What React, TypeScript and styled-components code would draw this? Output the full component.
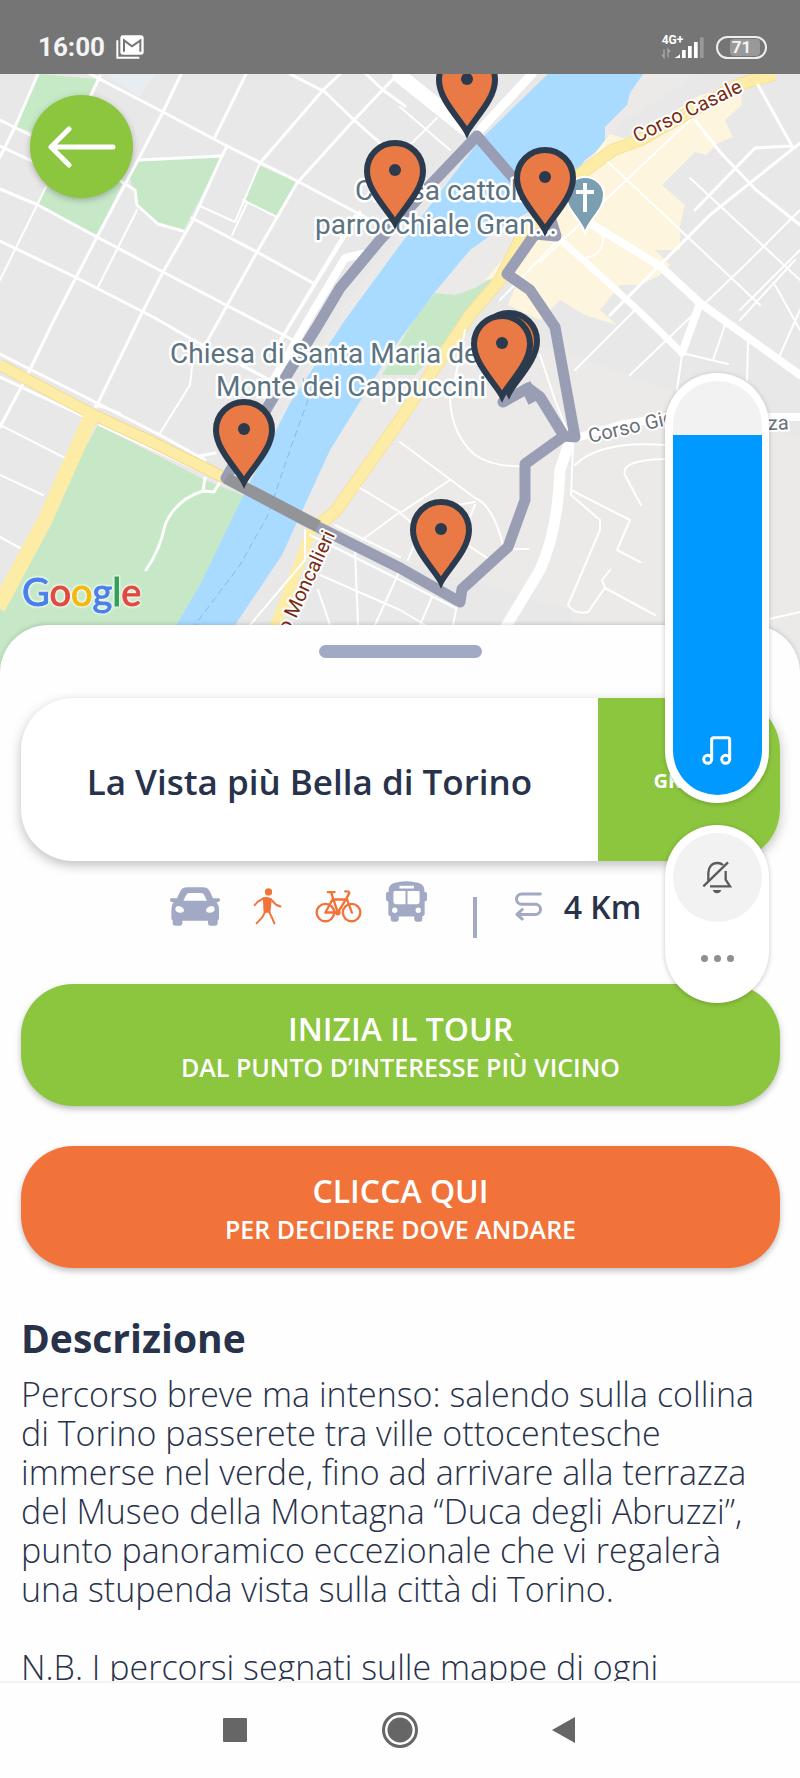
import React, { useState } from "react";
import styled, { createGlobalStyle } from "styled-components";

const colors = {
  green: "#8cc63e",
  orange: "#f2733a",
  lilac: "#a2a9c4",
  navy: "#28324a",
  blue: "#0099ff",
  pin: "#e97a45",
  pinEdge: "#2b3a4c",
};

const GlobalStyle = createGlobalStyle`
  * { box-sizing: border-box; }
  body { margin: 0; background: #fff; }
  button { border: 0; padding: 0; background: none; font: inherit; color: inherit; cursor: pointer; }
  h1, h2, p { margin: 0; }
  svg { display: block; }
`;

const Screen = styled.div`
  position: relative;
  display: flex;
  flex-direction: column;
  height: 100vh;
  overflow: hidden;
  background: #fefefe;
  color: ${colors.navy};
  font-family: "Open Sans", Lato, sans-serif;
`;

const StatusBar = styled.header`
  display: flex;
  flex: none;
  align-items: flex-end;
  justify-content: space-between;
  height: 74px;
  padding: 0 33px 14px 38px;
  background: #757575;
  color: #f4f4f4;
  font-family: Roboto, sans-serif;
`;

const StatusGroup = styled.div<{ $gap: number }>`
  display: flex;
  align-items: center;
  gap: ${(p) => p.$gap}px;
  height: 26px;
`;

const Clock = styled.time`
  font-size: 26px;
  line-height: 26px;
  font-weight: 700;
`;

const Battery = styled.div`
  display: flex;
  align-items: center;
  justify-content: center;
  width: 51px;
  height: 23px;
  border: 2px solid #eee;
  border-radius: 12px;
  font-size: 17px;
  line-height: 17px;
  font-weight: 700;

  span {
    padding: 0 9px 0 2px;
    margin-left: 7px;
    border-radius: 4px;
    background: #999;
  }
`;

const MapArea = styled.section`
  position: relative;
  flex: none;
  height: 551px;
`;

const MapDrawing = styled.svg`
  width: 100%;
  height: 600px;
  font-family: Roboto, sans-serif;
`;

const BackButton = styled.button`
  position: absolute;
  top: 21px;
  left: 30px;
  width: 103px;
  height: 103px;
  border-radius: 50%;
  background: ${colors.green};
  box-shadow: 0 2px 6px rgba(0, 0, 0, 0.25);

  svg { margin: 0 auto; }
`;

const Sheet = styled.main`
  position: relative;
  flex: 1;
  min-height: 0;
  overflow: hidden;
  display: flex;
  flex-direction: column;
  padding: 20px 20px 0 21px;
  border-radius: 48px 48px 0 0;
  background: #fefefe;
  box-shadow: 0 -1px 4px rgba(0, 0, 0, 0.15);
`;

const Handle = styled.button`
  flex: none;
  align-self: center;
  width: 163px;
  height: 13px;
  border-radius: 7px;
  background: ${colors.lilac};
`;

const TitleCard = styled.section`
  display: flex;
  flex: none;
  height: 163px;
  margin-top: 40px;
  overflow: hidden;
  border-radius: 52px;
  background: #fff;
  box-shadow: 0 4px 12px rgba(0, 0, 0, 0.25);
`;

const TourName = styled.h1`
  display: flex;
  flex: 1;
  align-items: center;
  justify-content: center;
  padding-top: 4px;
  font-size: 35px;
  line-height: 44px;
  font-weight: 600;
`;

const Price = styled.div`
  display: flex;
  align-items: center;
  justify-content: center;
  width: 24%;
  padding-top: 2px;
  background: ${colors.green};
  color: #fff;
  font-size: 20px;
  font-weight: 700;
`;

const Facts = styled.section`
  display: flex;
  flex: none;
  align-items: center;
  align-self: center;
  height: 123px;
  padding: 0 0 32px 10px;
`;

const ModeList = styled.ul`
  display: flex;
  align-items: center;
  gap: 24px;
  margin: 0;
  padding: 0;
  list-style: none;
`;

const Mode = styled.li<{ $space?: number; $lift?: number }>`
  padding: 0 ${(p) => p.$space ?? 0}px ${(p) => p.$lift ?? 0}px;
`;

const Divider = styled.span`
  width: 4px;
  height: 41px;
  margin: 22px 38px 0 46px;
  background: ${colors.lilac};
`;

const Distance = styled.span`
  margin-left: 22px;
  font-size: 32px;
  line-height: 40px;
  font-weight: 600;
`;

const Actions = styled.div`
  display: flex;
  flex: none;
  flex-direction: column;
  gap: 40px;
`;

const ActionButton = styled.button<{ $tone: string }>`
  display: flex;
  flex-direction: column;
  align-items: center;
  justify-content: center;
  height: 122px;
  padding-top: 4px;
  border-radius: 52px;
  background: ${(p) => p.$tone};
  box-shadow: 0 3px 6px rgba(0, 0, 0, 0.25);
  color: #fff;
  font-size: 25px;
  line-height: 36px;
  font-weight: 600;

  strong { font-size: 32px; line-height: 40px; font-weight: 600; }
`;

const Description = styled.section`
  flex: none;
  padding-top: 45px;

  h2 { font-size: 39px; line-height: 50px; font-weight: 700; }
`;

const Paragraph = styled.p`
  margin-top: 12px;
  margin-bottom: 39px;
  font-size: 34px;
  line-height: 39px;
  font-weight: 300;

  & + & { margin-top: 0; }
`;

const NavBar = styled.nav`
  position: relative;
  display: flex;
  flex: none;
  align-items: center;
  justify-content: center;
  gap: 118px;
  height: 97px;
  border-top: 2px solid #f3f3f3;
  background: #fefefe;
`;

const NavButton = styled.button`
  width: 46px;
  height: 46px;
`;

const Floating = styled.aside`
  position: absolute;
  top: 373px;
  right: 31px;
  display: flex;
  flex-direction: column;
  gap: 22px;
  width: 104px;
`;

const Pill = styled.div<{ $height: number }>`
  position: relative;
  display: flex;
  flex-direction: column;
  align-items: center;
  height: ${(p) => p.$height}px;
  padding: 8px;
  border-radius: 52px;
  background: #fff;
  box-shadow: 0 1px 5px rgba(0, 0, 0, 0.22);
`;

const Track = styled.div`
  display: flex;
  flex-direction: column;
  justify-content: flex-end;
  width: 89px;
  height: 100%;
  overflow: hidden;
  border-radius: 45px;
  background: #f2f2f2;
`;

const Level = styled.div`
  display: flex;
  align-items: flex-end;
  justify-content: center;
  padding-bottom: 30px;
  background: ${colors.blue};
`;

const VolumeInput = styled.input`
  position: absolute;
  inset: 0;
  width: 100%;
  height: 100%;
  margin: 0;
  opacity: 0;
  writing-mode: vertical-lr;
  direction: rtl;
`;

const MuteButton = styled.button`
  display: flex;
  align-items: center;
  justify-content: center;
  width: 89px;
  height: 89px;
  border-radius: 50%;
  background: #f2f2f2;
`;

const MoreButton = styled.button`
  display: flex;
  align-items: center;
  justify-content: center;
  gap: 6px;
  width: 60px;
  height: 72px;

  span { width: 7px; height: 7px; border-radius: 50%; background: #8f8f8f; }
`;

const CarIcon = () => (
  <svg width="50" height="39" viewBox="0 0 150 117" fill={colors.lilac} aria-label="Auto" role="img">
    <path
      fillRule="evenodd"
      d="M4 34 H21 L30 14 Q36 1 52 1 H98 Q114 1 120 14 L129 34 H146 Q151 34 150 40 Q149 46 140 46 Q147 55 147 68 V94 Q147 98 143 100 V108 Q143 116 134 116 H122 Q114 116 114 108 V101 H37 V108 Q37 116 28 116 H17 Q8 116 8 108 V100 Q4 98 4 93 V68 Q4 54 11 46 Q1 46 0 40 Q0 34 4 34 Z M40 41 H111 L102 23 Q100 18 93 18 H58 Q52 18 49 23 Z M16 66 Q16 57 26 57 Q42 60 42 71 Q40 77 29 77 Q16 76 16 66 Z M134 66 Q134 57 124 57 Q108 60 108 71 Q110 77 121 77 Q134 76 134 66 Z"
    />
  </svg>
);

const WalkIcon = () => (
  <svg width="29" height="37" viewBox="0 0 86 112" fill="none" stroke={colors.orange} strokeWidth="6" strokeLinecap="round" strokeLinejoin="round" aria-label="A piedi" role="img">
    <circle cx="46" cy="12" r="8" fill={colors.orange} />
    <path d="M32 31 L42 30 L53 34 L49 72 H34 Z" fill={colors.orange} />
    <path d="M32 31 L14 41 L4 52 M53 34 L68 50 L82 56 M36 72 L27 89 L10 107 M48 72 L56 89 L64 107" />
  </svg>
);

const BikeIcon = () => (
  <svg width="47" height="33" viewBox="0 0 140 98" fill="none" stroke={colors.orange} strokeWidth="7" strokeLinecap="round" strokeLinejoin="round" aria-label="Bicicletta" role="img">
    <circle cx="31" cy="67" r="26" />
    <circle cx="109" cy="67" r="26" />
    <path d="M31 67 L52 28 H92 L68 67 H31 M38 6 H58 M48 7 L68 67 M90 4 Q104 3 102 10 L94 24 L110 67" />
    <circle cx="68" cy="67" r="5" />
  </svg>
);

const BusIcon = () => (
  <svg width="41" height="41" viewBox="0 0 122 122" fill={colors.lilac} aria-label="Autobus" role="img">
    <path
      fillRule="evenodd"
      d="M8 24 Q10 10 24 6 Q60 -4 98 6 Q112 10 114 24 V32 Q122 32 122 38 V54 Q122 61 115 61 V100 Q115 104 108 105 V114 Q108 121 102 121 H91 Q84 121 84 114 V106 H38 V114 Q38 121 31 121 H21 Q14 121 14 114 V105 Q7 104 7 100 V61 Q0 61 0 54 V38 Q0 32 8 32 Z M40 14 V22 H83 V14 Z M26 30 Q22 30 22 34 V62 Q22 69 29 69 H58 V30 Z M64 30 V69 H93 Q100 69 100 62 V34 Q100 30 96 30 Z M26 79 A8 8 0 1 0 26 95 A8 8 0 1 0 26 79 Z M96 79 A8 8 0 1 0 96 95 A8 8 0 1 0 96 79 Z"
    />
  </svg>
);

const RouteIcon = () => (
  <svg width="27" height="29" viewBox="0 0 82 86" fill="none" stroke={colors.lilac} strokeWidth="9" strokeLinecap="round" strokeLinejoin="round" aria-hidden="true">
    <path d="M77 5 H20 A15 15 0 0 0 20 36 H62 A15 15 0 0 1 62 67 H6 M22 52 L6 67 L22 81" />
  </svg>
);

const road = (d: string, width: number) => ({ d, width });

const streets = [
  road("M90 74 L163 112 L227 146 L297 181 L380 225", 3),
  road("M38 74 L15 127 L0 157 M0 120 L30 135 M0 146 L34 162 M100 76 L90 97", 3),
  road("M112 176 L135 190 L137 205 L158 224 L183 231 M140 160 L222 156", 3),
  road("M181 74 L163 112 L138 160 L97 237 L54 320 L25 380 L0 427", 3),
  road("M246 74 L215 137 M227 146 L222 156 L193 220 L163 272 L140 317 L96 407", 3),
  road("M0 189 L38 205 L97 237 L163 272 L226 305 L293 340 M0 241 L75 277 L155 318 L193 340 L270 380", 3),
  road("M340 74 L323 90 L260 163 M394 78 L354 120 L297 183 L257 252 L205 345", 3),
  road("M260 163 L235 222 L200 206 M247 203 L232 235 M243 200 L277 217", 2),
  road("M290 74 L325 92 L354 120 L380 143 M366 74 L383 90 L405 106", 3),
  road("M192 218 L257 252 L313 283 M360 212 L293 320 L275 350", 3),
  road("M46 187 L0 280 M137 210 L98 287 M195 340 L190 385 L160 433", 2),
  road("M362 254 L345 258 L308 320 L265 395", 8),
  road("M355 215 L280 340", 2),
  road("M0 354 L95 402 L160 435 L205 460 M0 377 L85 417 M100 425 L215 478", 3),
  road("M0 425 L65 458 M0 475 L43 495 M0 537 L20 548 M95 405 L120 413", 2),
  road("M215 453 L200 456 L205 465 M220 482 L214 492 L203 491 L205 478 M203 491 Q175 500 165 525 Q160 550 146 570", 3),
  road("M360 488 L400 512 L362 540 M335 525 L400 557 M310 535 L420 590 L455 608 M320 575 L400 610 L450 640", 2),
  road("M305 530 L305 560 L250 625 M355 550 L358 625 M318 590 L330 625 M400 570 L375 625 M432 597 L420 625 M457 605 L453 625", 2),
  road("M400 442 L475 498 Q493 505 503 545 M450 480 L400 513 L420 530 L408 560 M475 505 L460 540 L490 560 M445 507 L475 502 M500 549 L528 549", 2),
  road("M458 365 L450 400 Q452 435 475 455 Q495 468 525 466 M540 355 L555 400 L567 430 M465 330 L458 365", 2),
  road("M573 445 L571 495 L600 520 L600 530 L568 605 Q575 615 588 612 L605 588 L602 580 L610 570 M573 491 L630 520 L617 550 L640 562", 2),
  road("M575 465 Q600 440 665 445 M665 459 Q620 460 625 475 L641 505 M605 588 L655 615 M765 620 L800 612", 2),
  road("M635 310 L575 370 M682 353 L728 364 M682 355 L677 390 M748 342 L747 380 M725 325 L713 360 M800 310 L780 355", 2),
  road("M400 76 L465 128", 15),
  road("M532 74 L480 130", 9),
  road("M400 107 L450 150 M437 118 L410 145", 2),
  road("M758 85 L792 146 L755 148 L695 210 M695 120 L720 152 L756 190 L800 225 M800 143 L710 215 L610 315", 3),
  road("M690 120 L600 205 L540 262 M690 178 L800 280 M608 162 L760 305 M800 210 L745 265 L630 375 M795 260 L740 320", 2),
  road("M775 285 L800 330 M560 238 L500 300 M603 235 Q605 255 585 258 M740 310 L775 275 L800 250", 2),
  road("M588 222 L660 266 L700 303 L800 375 M700 303 L682 353", 8),
  road("M555 235 L602 277 L640 312 L682 353", 7),
  road("M569 443 L560 470 Q558 530 540 570 L505 628", 11),
  road("M570 440 L620 425 L665 417 L800 417", 8),
];

const pins = [
  [467, 79],
  [395, 170],
  [545, 177],
  [509, 340],
  [502, 343],
  [244, 429],
  [441, 529],
];

const Pin = ({ x, y }: { x: number; y: number }) => (
  <g transform={`translate(${x} ${y})`}>
    <path d="M0 53 C-6 41 -28 21 -28 1 A28 28 0 0 1 28 1 C28 21 6 41 0 53 Z" fill={colors.pin} stroke={colors.pinEdge} strokeWidth="6" />
    <circle r="6" fill={colors.pinEdge} />
  </g>
);

const GoogleLogo = styled.text`
  font-family: Lato, sans-serif;
  font-size: 38px;
  font-weight: 400;
  filter: drop-shadow(0 0 1px #fff) drop-shadow(0 0 1px #fff);
`;

const TourMap = () => (
  <MapDrawing viewBox="0 74 800 600" preserveAspectRatio="xMidYMin slice" role="img" aria-label="Mappa del percorso">
    <rect x="-400" y="74" width="1600" height="600" fill="#e8e8e8" />
    <path d="M105 74 H155 L140 97 Z" fill="#e8edf2" />
    <path d="M548 74 L400 235 L345 305 L285 403 L240 500 L330 540 L570 610 L600 670 H800 V440 L560 350 L430 330 L500 270 L560 200 L625 120 L700 74 Z" fill="#ebeae8" />
    <path d="M38 74 L97 79 L87 100 L60 140 L16 127 Z" fill="#c6eac6" />
    <g fill="#c6e8c7">
      <path d="M46 185 L123 182 L97 235 L38 205 Z" />
      <path d="M140 160 L222 156 L183 231 L158 224 L137 205 L130 178 Z" />
      <path d="M260 166 L297 182 L277 217 L244 200 Z" />
      <path d="M98 425 L205 480 L245 496 L205 585 L160 670 H0 V600 Z" />
      <path d="M505 270 L475 288 L455 295 L435 293 L415 318 L382 375 L415 375 L470 315 Z" />
    </g>
    <path d="M548 74 L480 140 L400 245 L345 320 L290 403 L241 500 L200 585 L150 670 H215 L235 625 L282 555 L330 450 L392 350 L435 292 L470 250 L505 225 L560 195 L585 160 L605 145 L605 127 L627 105 L630 93 L643 74 Z" fill="#a9daff" />
    <path d="M610 134 L630 140 L700 95 L740 85 L742 105 L725 120 L733 137 L718 143 L706 155 L695 152 L662 185 L685 205 L680 225 L680 250 L655 250 L670 265 L660 275 L640 285 L620 285 L600 310 L617 325 L585 315 L560 300 L540 320 L508 305 L520 275 L485 280 L545 210 L575 178 Z" fill="#fdf5dd" />
    <g fill="none" strokeLinejoin="round">
      <path d="M775 74 L740 84 L640 140 L613 150 L575 178 L520 240 L500 280 L470 315 L400 420 L335 512 L312 530" stroke="#f7e19a" strokeWidth="13" />
      <path d="M775 74 L740 84 L640 140 L613 150 L575 178 L520 240 L500 280 L470 315 L400 420 L335 512 L312 530 M312 530 L270 640" stroke="#fdeca6" strokeWidth="11" />
    </g>
    <g fill="none" stroke="#fff" strokeLinecap="round" strokeLinejoin="round">
      {streets.map((s) => (
        <path key={s.d} d={s.d} strokeWidth={s.width} />
      ))}
    </g>
    <path d="M0 365 L92 414 L150 441 L225 478" fill="none" stroke="#f3da92" strokeWidth="12" />
    <path d="M0 365 L92 414 L150 441 L225 478" fill="none" stroke="#fdeca6" strokeWidth="10" />
    <path d="M92 414 L45 520 L-2 608" fill="none" stroke="#fdeca6" strokeWidth="15" />
    <path d="M303 378 L308 400 L290 450 L268 515 L240 565 L195 625" fill="none" stroke="#86bce0" strokeWidth="1" strokeDasharray="7 4" />
    <path
      d="M477 136 L435 180 L380 240 L340 288 L318 325 L290 370 L270 403 L226 478 L300 518 L400 568 L460 602 L462 589 L508 547 L525 500 L525 464 L564 436 L540 397 L528 388 L503 402 M564 436 L575 437 L555 327 L530 290 L507 274 L535 234 L556 236 L551 220 L515 180 L477 136"
      fill="none"
      stroke="#999eb5"
      strokeWidth="11"
      strokeLinejoin="round"
      strokeLinecap="round"
    />
    <path d="M525 384 L534 402" stroke="#999eb5" strokeWidth="12" />
    <path d="M226 478 L318 526" stroke="#939498" strokeWidth="12" />
    <path d="M585 233 C581 219 566 210 566 195 A19 18 0 0 1 604 195 C604 210 589 219 585 233 Z" fill="#7b9fb0" stroke="#fff" strokeWidth="2" />
    <path d="M585 183 V212 M576 192 H594" stroke="#fff" strokeWidth="4" />
    <g fontSize="28" fill="#5b7381" stroke="#fff" strokeWidth="5" strokeLinejoin="round" paintOrder="stroke">
      <text x="355" y="200">Chiesa cattolica</text>
      <text x="315" y="234">parrocchiale Gran...</text>
      <text x="170" y="363">Chiesa di Santa Maria del</text>
      <text x="216" y="396">Monte dei Cappuccini</text>
    </g>
    <g stroke="#fff" strokeWidth="4" strokeLinejoin="round" paintOrder="stroke">
      <text transform="translate(637 143) rotate(-26)" fontSize="20" fill="#7a2c12">Corso Casale</text>
      <text transform="translate(289 634) rotate(-65)" fontSize="20" fill="#7a2c12">o Moncalieri</text>
      <text transform="translate(590 443) rotate(-13)" fontSize="20" fill="#6b7075">Corso Gio</text>
      <text transform="translate(768 430) rotate(-2)" fontSize="20" fill="#6b7075">za</text>
    </g>
    {pins.map(([x, y]) => (
      <Pin key={`${x}-${y}`} x={x} y={y} />
    ))}
    <GoogleLogo x="22" y="606" strokeWidth="1">
      <tspan fill="#4a80e8" stroke="#4a80e8">G</tspan>
      <tspan fill="#e04a3f" stroke="#e04a3f">o</tspan>
      <tspan fill="#f2b90f" stroke="#f2b90f">o</tspan>
      <tspan fill="#4a80e8" stroke="#4a80e8">g</tspan>
      <tspan fill="#34a058" stroke="#34a058">l</tspan>
      <tspan fill="#e04a3f" stroke="#e04a3f">e</tspan>
    </GoogleLogo>
  </MapDrawing>
);

export default function App() {
  const [volume, setVolume] = useState(87);

  return (
    <>
      <GlobalStyle />
      <Screen>
        <StatusBar>
          <StatusGroup $gap={11}>
            <Clock>16:00</Clock>
            <svg width="28" height="24" viewBox="0 0 84 72" fill="none" stroke="#fff" aria-label="Gmail" role="img">
              <path d="M4 16 V68 H70" strokeWidth="6" />
              <rect x="15" y="3" width="66" height="54" rx="6" fill="#fff" strokeWidth="4" />
              <path d="M24 50 V16 L48 34 L73 16 V50" stroke="#757575" strokeWidth="6" />
            </svg>
          </StatusGroup>
          <StatusGroup $gap={11}>
            <svg width="44" height="26" viewBox="0 0 132 78" aria-label="4G+" role="img">
              <text x="2" y="30" fontSize="36" fontWeight="700" fill="#fff">4G+</text>
              <path d="M9 46 V70 L3 62 M21 70 V46 L27 54" fill="none" stroke="#aaa" strokeWidth="4" />
              <path d="M40 72 Q52 68 57 60 V72 Z M63 48 H74 V72 H63 Z M81 36 H92 V72 H81 Z M99 24 H110 V72 H99 Z" fill="#fff" />
              <path d="M117 10 H128 V72 H117 Z" fill="#999" />
            </svg>
            <Battery>
              <span>71</span>
            </Battery>
          </StatusGroup>
        </StatusBar>

        <MapArea>
          <TourMap />
          <BackButton aria-label="Indietro">
            <svg width="70" height="42" viewBox="0 0 70 42" fill="none" stroke="#fff" strokeWidth="5" strokeLinecap="round" strokeLinejoin="round">
              <path d="M66 21 H4 M22 3 L4 21 L22 39" />
            </svg>
          </BackButton>
        </MapArea>

        <Sheet>
          <Handle aria-label="Ridimensiona pannello" />
          <TitleCard>
            <TourName>La Vista più Bella di Torino</TourName>
            <Price>GRATIS</Price>
          </TitleCard>
          <Facts>
            <ModeList>
              <Mode><CarIcon /></Mode>
              <Mode $space={9}><WalkIcon /></Mode>
              <Mode><BikeIcon /></Mode>
              <Mode $lift={10}><BusIcon /></Mode>
            </ModeList>
            <Divider />
            <RouteIcon />
            <Distance>4 Km</Distance>
          </Facts>
          <Actions>
            <ActionButton $tone={colors.green}>
              <strong>INIZIA IL TOUR</strong>
              DAL PUNTO D’INTERESSE PIÙ VICINO
            </ActionButton>
            <ActionButton $tone={colors.orange}>
              <strong>CLICCA QUI</strong>
              PER DECIDERE DOVE ANDARE
            </ActionButton>
          </Actions>
          <Description>
            <h2>Descrizione</h2>
            <Paragraph>
              Percorso breve ma intenso: salendo sulla collina di Torino passerete tra ville ottocentesche immerse nel
              verde, fino ad arrivare alla terrazza del Museo della Montagna “Duca degli Abruzzi”, punto panoramico
              eccezionale che vi regalerà una stupenda vista sulla città di Torino.
            </Paragraph>
            <Paragraph>N.B. I percorsi segnati sulle mappe di ogni</Paragraph>
          </Description>
        </Sheet>

        <NavBar>
          <NavButton aria-label="Recenti">
            <svg width="46" height="46" viewBox="0 0 46 46"><rect x="10" y="10" width="24" height="24" rx="1" fill="#666" /></svg>
          </NavButton>
          <NavButton aria-label="Home">
            <svg width="46" height="46" viewBox="0 0 46 46">
              <circle cx="23" cy="22" r="16.5" fill="none" stroke="#666" strokeWidth="3" />
              <circle cx="23" cy="22" r="12.5" fill="#666" />
            </svg>
          </NavButton>
          <NavButton aria-label="Indietro">
            <svg width="46" height="46" viewBox="0 0 46 46"><path d="M34 9 V35 L11 22 Z" fill="#666" /></svg>
          </NavButton>
        </NavBar>

        <Floating>
          <Pill $height={430}>
            <Track>
              <Level style={{ height: `${volume}%` }}>
                <svg width="30" height="29" viewBox="0 0 90 87" fill="none" stroke="#fff" strokeWidth="9">
                  <circle cx="17" cy="70" r="12" />
                  <circle cx="71" cy="70" r="12" />
                  <path d="M29 70 V11 Q29 5 35 5 H77 Q83 5 83 11 V70" />
                </svg>
              </Level>
            </Track>
            <VolumeInput
              type="range"
              aria-label="Volume multimediale"
              value={volume}
              onChange={(e) => setVolume(Number(e.target.value))}
            />
          </Pill>
          <Pill $height={178}>
            <MuteButton aria-label="Silenzia">
              <svg width="30" height="33" viewBox="0 0 90 99" fill="none" stroke="#5c5c5c" strokeWidth="7">
                <path d="M19 60 V35 C19 18 30 6 46 6 C53 6 59 8 63 12 M71 30 V56 L84 76 H24 M4 76 L78 4" />
                <path d="M32 87 H58 Q54 97 45 97 Q36 97 32 87 Z" fill="#5c5c5c" stroke="none" />
              </svg>
            </MuteButton>
            <MoreButton aria-label="Altro">
              <span /><span /><span />
            </MoreButton>
          </Pill>
        </Floating>
      </Screen>
    </>
  );
}
